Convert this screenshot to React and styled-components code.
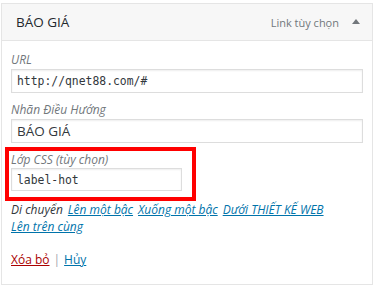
import styled, { createGlobalStyle } from "styled-components";

const GlobalStyle = createGlobalStyle`
  body {
    margin: 0;
    background: #fff;
    font-family: "Open Sans", "Noto Sans", sans-serif;
    color: #23282d;
  }
`;

const moveLinks = ["Lên một bậc", "Xuống một bậc", "Dưới THIẾT KẾ WEB", "Lên trên cùng"];

const App = () => {
  return (
    <Page>
      <GlobalStyle />
      <Panel>
        <Header>
          <Title>BÁO GIÁ</Title>
          <Controls>
            <ItemType>Link tùy chọn</ItemType>
            <Arrow />
          </Controls>
        </Header>

        <Settings>
          <Field>
            <Label>URL</Label>
            <Input mono defaultValue="http://qnet88.com/#" />
          </Field>
          <Field>
            <Label>Nhãn Điều Hướng</Label>
            <Input defaultValue="BÁO GIÁ" />
          </Field>

          <Highlight>
            <Label>Lớp CSS (tùy chọn)</Label>
            <Input mono narrow defaultValue="label-hot" />
          </Highlight>

          <MoveRow>
            <span>Di chuyển</span>
            {moveLinks.map((text) => (
              <MoveLink key={text} href="#">
                {text}
              </MoveLink>
            ))}
          </MoveRow>

          <Actions>
            <DeleteLink href="#">Xóa bỏ</DeleteLink>
            <Sep>|</Sep>
            <CancelLink href="#">Hủy</CancelLink>
          </Actions>
        </Settings>
      </Panel>
    </Page>
  );
};

export default App;

// STYLING

const Page = styled.div`
  padding: 3px 0 0 1px;
`;

const Panel = styled.div`
  width: 372px;
  box-sizing: border-box;
  border: 1px solid #e5e5e5;
  background: #fff;
`;

const Header = styled.div`
  height: 36px;
  display: flex;
  align-items: center;
  justify-content: space-between;
  padding: 0 12px 0 14px;
  background: #f7f7f7;
  border-bottom: 1px solid #e5e5e5;
`;

const Title = styled.span`
  font-size: 13.5px;
  color: #23282d;
`;

const Controls = styled.div`
  display: flex;
  align-items: center;
  gap: 13px;
`;

const ItemType = styled.span`
  font-size: 11px;
  color: #72777c;
`;

const Arrow = styled.span`
  width: 0;
  height: 0;
  border-left: 4px solid transparent;
  border-right: 4px solid transparent;
  border-bottom: 5px solid #72777c;
  margin-top: -2px;
`;

const Settings = styled.div`
  padding: 10px 9px 15px;
`;

const Field = styled.div`
  display: flex;
  flex-direction: column;
  margin-bottom: 8px;
`;

const Label = styled.label`
  font-size: 12px;
  line-height: 18px;
  font-style: italic;
  color: #72777c;
`;

const Input = styled.input`
  box-sizing: border-box;
  width: ${(p) => (p.narrow ? "171px" : "352px")};
  height: ${(p) => (p.narrow ? "23px" : "24px")};
  margin: 0;
  padding: 0 5px;
  border: 1px solid #ddd;
  box-shadow: inset 0 1px 2px rgba(0, 0, 0, 0.07);
  background: #fff;
  color: #32373c;
  font-family: ${(p) =>
    p.mono ? `"DejaVu Sans Mono", "Liberation Mono", monospace` : `"Open Sans", "Noto Sans", sans-serif`};
  font-size: ${(p) => (p.mono ? "11.4px" : "13.5px")};
  outline: none;
`;

const Highlight = styled.div`
  display: flex;
  flex-direction: column;
  width: fit-content;
  margin: -4px 0 0 -6px;
  padding: 0 10px 6px 2px;
  border: 4px solid #ff0000;

  label {
    line-height: 17px;
  }
`;

const MoveRow = styled.div`
  display: flex;
  flex-wrap: wrap;
  column-gap: 5px;
  font-size: 12px;
  line-height: 17px;
  font-style: italic;
  color: #32373c;
`;

const MoveLink = styled.a`
  color: #0073aa;
  text-decoration: underline;
  white-space: nowrap;
`;

const Actions = styled.div`
  margin-top: 16px;
  font-size: 12px;
  line-height: 18px;
  display: flex;
  gap: 4px;
`;

const DeleteLink = styled.a`
  color: #a00;
  text-decoration: underline;
`;

const Sep = styled.span`
  color: #a0a5aa;
`;

const CancelLink = styled.a`
  color: #0073aa;
  text-decoration: underline;
`;
